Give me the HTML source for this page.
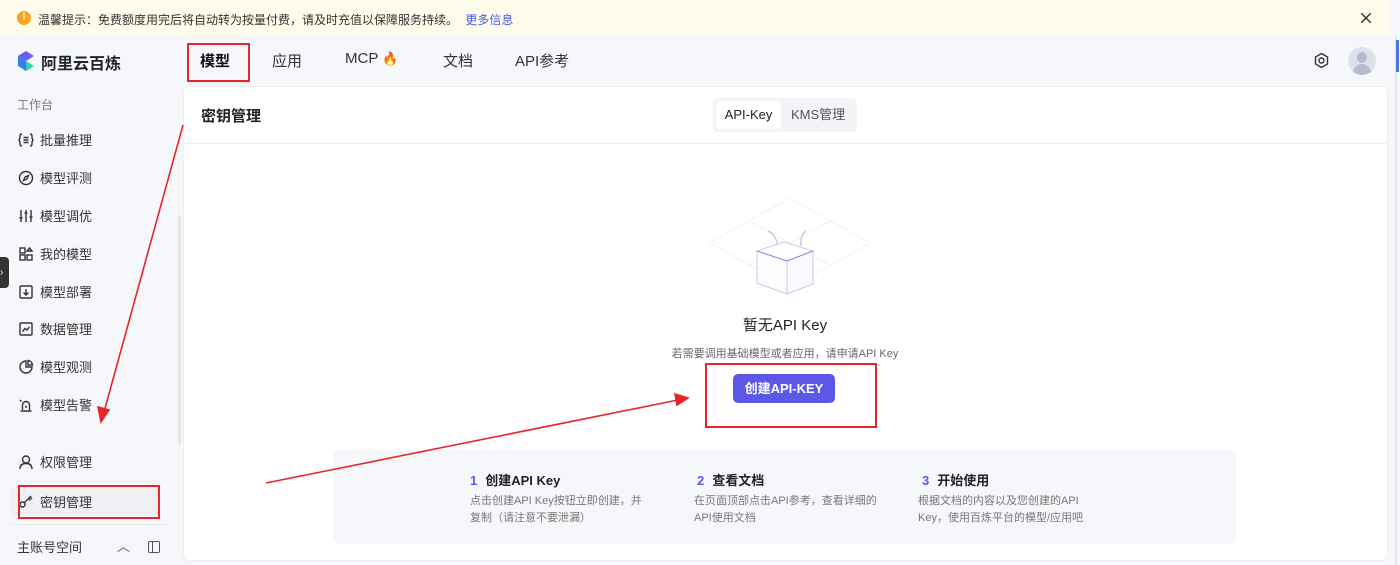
<!DOCTYPE html>
<html><head><meta charset="utf-8"><style>
*{margin:0;padding:0;box-sizing:border-box}
body{width:1400px;height:565px;overflow:hidden;background:#f6f7fb;font-family:"Liberation Sans","Noto Sans CJK SC",sans-serif;color:#1f2329;position:relative}
.abs{position:absolute}
.banner{left:0;top:0;width:1390px;height:36px;background:#fdfbe9;font-size:12px;color:#333}
.nav a{position:absolute;top:50px;font-size:15px;color:#333}
.side{font-size:13px;color:#333}
.side div{position:absolute;left:18px;display:flex;align-items:center;gap:6px}
.side svg{width:16px;height:16px;fill:none;stroke:#333;stroke-width:1.4}
.card{left:183px;top:86px;width:1205px;height:475px;background:#fff;border:1px solid #eceef2;border-radius:6px}
.red{border:2px solid #e6262b;position:absolute}
</style></head><body>
<div class="abs" style="left:385px;top:0;width:1005px;height:3px;background:#e3e5e8"></div>
<div class="abs banner">
 <div class="abs" style="left:17px;top:11px;width:14px;height:14px;border-radius:50%;background:#f5a623;color:#fff;font-size:10px;text-align:center;line-height:14px;font-weight:bold">!</div>
 <div class="abs" style="left:38px;top:11px">温馨提示：免费额度用完后将自动转为按量付费，请及时充值以保障服务持续。 <span style="color:#4a5ce8;margin-left:4px">更多信息</span></div>
 <svg class="abs" style="left:1361px;top:13px" width="10" height="10" viewBox="0 0 10 10" stroke="#333" stroke-width="1.4"><path d="M0 0L10 10M10 0L0 10"/></svg>
</div>
<div class="abs" style="left:1395px;top:36px;width:2px;height:529px;background:#dfe3ea"></div>
<div class="abs" style="left:1396px;top:40px;width:3px;height:32px;background:#4a78e8"></div>
<svg class="abs" style="left:15px;top:50px" width="22" height="22" viewBox="0 0 22 22"><path d="M3 6L11 1L19 6L11 11Z" fill="#6a5cf0"/><path d="M3 6L11 11V21L3 16Z" fill="#3a7de8"/><path d="M11 11L19 16L11 21Z" fill="#2dd4b0"/></svg>
<div class="abs" style="left:41px;top:50px;font-size:16px;font-weight:bold;color:#1f2329">阿里云百炼</div>
<div class="nav">
 <a style="left:200px;font-weight:bold;color:#111">模型</a>
 <a style="left:272px">应用</a>
 <a style="left:345px">MCP <span style="color:#f08a3c;font-size:13px">🔥</span></a>
 <a style="left:443px">文档</a>
 <a style="left:515px">API参考</a>
</div>
<svg class="abs" style="left:1313px;top:52px" width="17" height="17" viewBox="0 0 17 17" fill="none" stroke="#333" stroke-width="1.4"><path d="M8.5 1.5L14.5 5V12L8.5 15.5L2.5 12V5Z"/><circle cx="8.5" cy="8.5" r="2.5"/></svg>
<div class="abs" style="left:1348px;top:47px;width:28px;height:28px;border-radius:50%;background:#dde1ea;overflow:hidden"><div class="abs" style="left:9px;top:5px;width:10px;height:11px;border-radius:50%;background:#b4bbcc"></div><div class="abs" style="left:5px;top:17px;width:18px;height:14px;border-radius:9px 9px 0 0;background:#b4bbcc"></div></div>
<div class="abs" style="left:17px;top:96px;font-size:12px;color:#777">工作台</div>
<div class="abs" style="left:178px;top:215px;width:3px;height:230px;background:#e3e5ea;border-radius:2px"></div>
<div class="abs" style="left:0;top:257px;width:9px;height:31px;background:#333;border-radius:0 4px 4px 0;color:#fff;font-size:10px;line-height:31px">›</div>
<div class="side">
 <div style="top:130px"><svg viewBox="0 0 16 16"><path d="M4 2Q2 2 2 4V6L1 8L2 10V12Q2 14 4 14M12 2Q14 2 14 4V6L15 8L14 10V12Q14 14 12 14M5.5 5.5H10.5M5.5 8H10.5M5.5 10.5H10.5"/></svg>批量推理</div>
 <div style="top:168px"><svg viewBox="0 0 16 16"><circle cx="8" cy="8" r="6.5"/><path d="M10.5 5.5L9 9L5.5 10.5L7 7Z"/></svg>模型评测</div>
 <div style="top:206px"><svg viewBox="0 0 16 16"><path d="M3 2V14M8 2V14M13 2V14M1.5 10H4.5M6.5 5H9.5M11.5 9H14.5"/></svg>模型调优</div>
 <div style="top:244px"><svg viewBox="0 0 16 16"><rect x="2" y="2" width="5" height="5"/><rect x="2" y="9" width="5" height="5"/><rect x="9" y="9" width="5" height="5"/><path d="M11.5 2L14 5H9Z"/></svg>我的模型</div>
 <div style="top:282px"><svg viewBox="0 0 16 16"><rect x="2" y="2" width="12" height="12" rx="1"/><path d="M8 5V11M5.5 8.5L8 11L10.5 8.5"/></svg>模型部署</div>
 <div style="top:319px"><svg viewBox="0 0 16 16"><rect x="2" y="2" width="12" height="12" rx="1"/><path d="M4.5 10.5L7 7.5L9 9L11.5 6"/></svg>数据管理</div>
 <div style="top:357px"><svg viewBox="0 0 16 16"><path d="M8 2A6 6 0 1 0 14 8H8Z"/><path d="M10 1.5A5 5 0 0 1 14.5 6H10Z"/></svg>模型观测</div>
 <div style="top:395px"><svg viewBox="0 0 16 16"><path d="M4.5 13V8A3.5 3.5 0 0 1 11.5 8V13M2.5 14H13.5M8 8.5V11M2 3L3.5 4.5"/></svg>模型告警</div>
 <div style="top:452px"><svg viewBox="0 0 16 16"><circle cx="8" cy="5.5" r="3.5"/><path d="M2 15Q2 9.5 8 9.5Q14 9.5 14 15"/></svg>权限管理</div>
 <div style="top:487px;left:10px;width:150px;height:28px;background:#eef0f4;border-radius:6px;padding-left:8px"><svg viewBox="0 0 16 16"><circle cx="4.5" cy="11.5" r="2.5"/><path d="M6.5 9.5L13 3M10.5 5.5L12.5 7.5M12 4L14 6"/></svg>密钥管理</div>
</div>
<div class="abs" style="left:10px;top:524px;width:158px;height:1px;background:#e6e8ec"></div>
<div class="abs" style="left:17px;top:537px;font-size:13px;color:#333">主账号空间</div>
<div class="abs" style="left:117px;top:536px;font-size:13px;color:#555">︿</div>
<div class="abs" style="left:148px;top:541px;width:12px;height:12px;border:1.3px solid #555;border-radius:2px"><div class="abs" style="left:3px;top:0;width:1px;height:10px;background:#555"></div></div>
<div class="abs card"></div>
<div class="abs" style="left:201px;top:105px;font-size:15px;font-weight:bold;color:#222">密钥管理</div>
<div class="abs" style="left:713px;top:98px;width:144px;height:34px;background:#f3f4f7;border-radius:5px"></div>
<div class="abs" style="left:716px;top:101px;width:65px;height:28px;background:#fff;border-radius:4px;font-size:13px;text-align:center;line-height:28px;color:#222">API-Key</div>
<div class="abs" style="left:791px;top:101px;font-size:13px;line-height:28px;color:#555">KMS管理</div>
<div class="abs" style="left:184px;top:143px;width:1203px;height:1px;background:#eceef2"></div>
<svg class="abs" style="left:690px;top:183px" width="200" height="125" viewBox="0 0 200 125" fill="none">
 <g stroke="#f0f1f4" stroke-width="1"><path d="M20 60L100 15L180 60L100 105Z"/><path d="M60 38L140 82M140 38L60 82"/></g>
 <path d="M78 48Q86 52 88 63M116 48Q110 52 111 63" stroke="#b8bde0" stroke-width="1.2"/>
 <path d="M67 68L94 59L123 68L97 78Z" stroke="#c8cbe0" fill="#fff"/>
 <path d="M67 68V100L97 111V78Z" stroke="#c8cbe0" fill="#fcfcfe"/>
 <path d="M97 78V111L123 101V68Z" stroke="#c8cbe0" fill="#fafafe"/>
 <path d="M67 68L97 78L123 68" stroke="#8f88e8"/>
</svg>
<div class="abs" style="left:0;width:1570px;top:314px;text-align:center;font-size:15px;color:#222">暂无API Key</div>
<div class="abs" style="left:0;width:1570px;top:345px;text-align:center;font-size:11px;color:#666">若需要调用基础模型或者应用，请申请API Key</div>
<div class="abs" style="left:733px;top:374px;width:102px;height:29px;background:#5b58e8;border-radius:5px;color:#fff;font-size:13px;text-align:center;line-height:29px;font-weight:bold">创建API-KEY</div>
<div class="abs" style="left:333px;top:450px;width:903px;height:94px;background:#f6f7fa;border-radius:6px"></div>
<div class="abs" style="left:470px;top:470px;font-size:13px;font-weight:bold;color:#222"><span style="color:#5b58e8;margin-right:8px">1</span>创建API Key</div>
<div class="abs" style="left:470px;top:493px;font-size:11px;line-height:17px;color:#777;width:175px">点击创建API Key按钮立即创建，并复制（请注意不要泄漏）</div>
<div class="abs" style="left:697px;top:470px;font-size:13px;font-weight:bold;color:#222"><span style="color:#5b58e8;margin-right:8px">2</span>查看文档</div>
<div class="abs" style="left:694px;top:493px;font-size:11px;line-height:17px;color:#777;width:185px">在页面顶部点击API参考，查看详细的<br>API使用文档</div>
<div class="abs" style="left:922px;top:470px;font-size:13px;font-weight:bold;color:#222"><span style="color:#5b58e8;margin-right:8px">3</span>开始使用</div>
<div class="abs" style="left:918px;top:493px;font-size:11px;line-height:17px;color:#777;width:180px">根据文档的内容以及您创建的API<br>Key，使用百炼平台的模型/应用吧</div>
<div class="red" style="left:187px;top:43px;width:63px;height:39px"></div>
<div class="red" style="left:18px;top:485px;width:142px;height:34px"></div>
<div class="red" style="left:705px;top:363px;width:172px;height:65px"></div>
<svg class="abs" style="left:0;top:0" width="1400" height="565">
 <g stroke="#e6262b" stroke-width="1.6" fill="#e6262b">
  <line x1="183" y1="125" x2="104" y2="412"/><path d="M101 422L98 407L109 410Z"/>
  <line x1="266" y1="483" x2="678" y2="400"/><path d="M688 398L675 394L677 405Z"/>
 </g>
</svg>
</body></html>
